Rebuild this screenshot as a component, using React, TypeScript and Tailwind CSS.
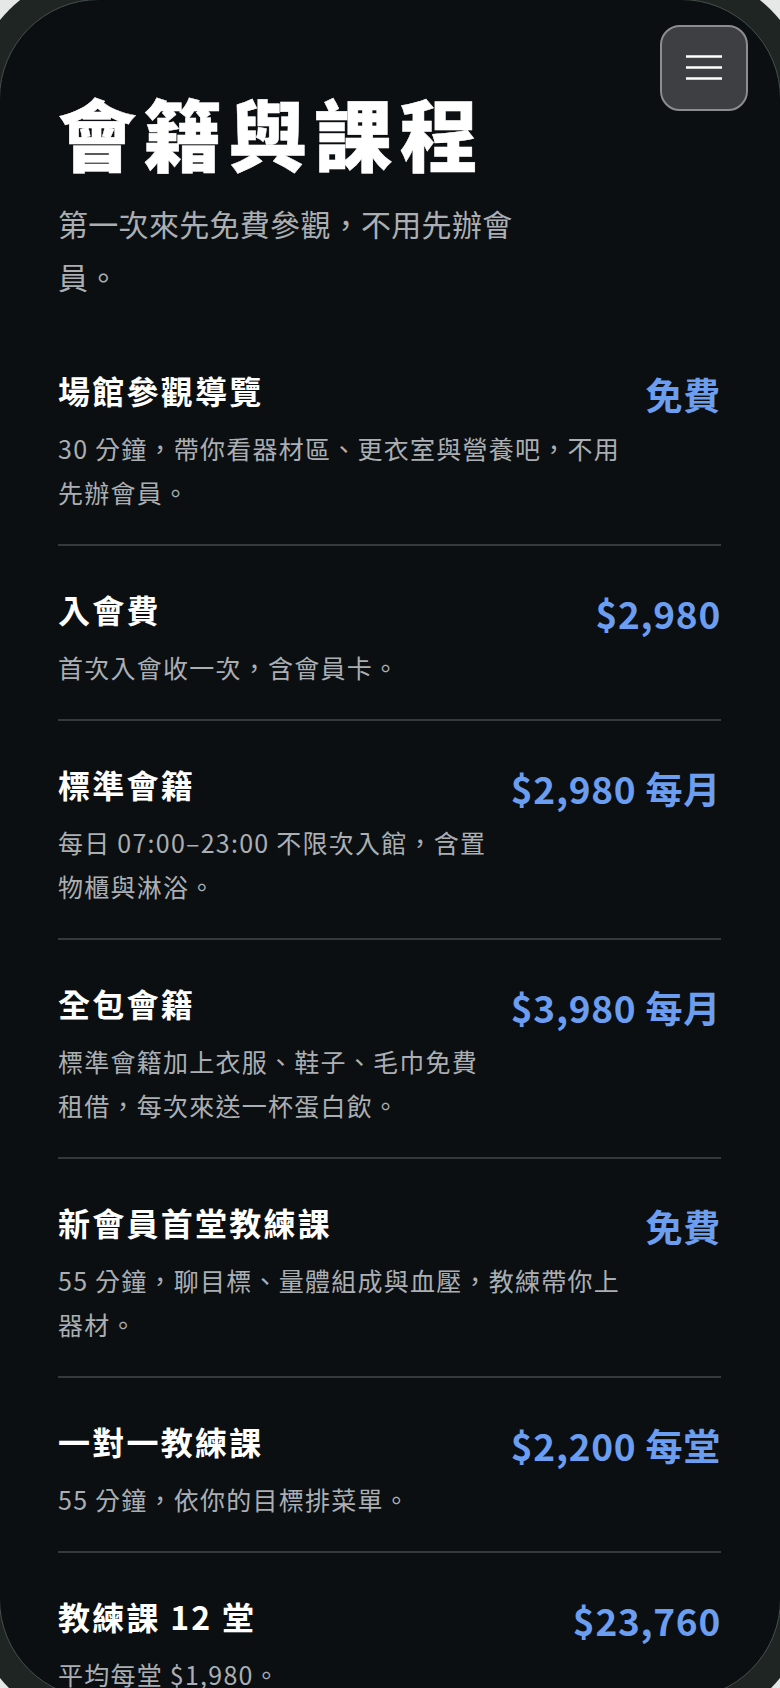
import React from "react";

type Item = { title: string; price: string; desc: string };

const items: Item[] = [
  { title: "場館參觀導覽", price: "免費", desc: "30 分鐘，帶你看器材區、更衣室與營養吧，不用先辦會員。" },
  { title: "入會費", price: "$2,980", desc: "首次入會收一次，含會員卡。" },
  { title: "標準會籍", price: "$2,980 每月", desc: "每日 07:00–23:00 不限次入館，含置物櫃與淋浴。" },
  { title: "全包會籍", price: "$3,980 每月", desc: "標準會籍加上衣服、鞋子、毛巾免費租借，每次來送一杯蛋白飲。" },
  { title: "新會員首堂教練課", price: "免費", desc: "55 分鐘，聊目標、量體組成與血壓，教練帶你上器材。" },
  { title: "一對一教練課", price: "$2,200 每堂", desc: "55 分鐘，依你的目標排菜單。" },
  { title: "教練課 12 堂", price: "$23,760", desc: "平均每堂 $1,980。" },
];

export default function App() {
  return (
    <div
      className="h-[1688px] overflow-hidden bg-[#e6e8e7]"
      style={{ fontFamily: '"Noto Sans CJK TC", "Noto Sans", sans-serif' }}
    >
      <div className="-m-[28px] rounded-[128px] bg-[#1e2523] p-[27px]">
        <div className="relative h-[1700px] overflow-hidden rounded-[100px] border border-[#46504c] bg-[#0c0f12] pl-[58px] pr-[59px] pt-[87px]">
          <button
            type="button"
            aria-label="選單"
            className="absolute right-[32px] top-[25px] flex h-[86px] w-[88px] items-center justify-center rounded-[20px] border-2 border-[#8c8d90] bg-[#3e3f43]"
          >
            <svg width="36" height="26" viewBox="0 0 36 26" fill="none">
              <path d="M0 1.5H36M0 12.5H36M0 23.5H36" stroke="#ffffff" strokeWidth="2.6" />
            </svg>
          </button>

          <h1 className="text-[78px] font-black leading-[90px] tracking-[0.095em] text-white [-webkit-text-stroke:0.5px_#ffffff]">
            會籍與課程
          </h1>
          <p className="mt-[20px] max-w-[468px] text-[30px] leading-[53px] tracking-[0.01em] text-[#abafb4]">
            第一次來先免費參觀，不用先辦會員。
          </p>

          <ul className="mt-[24px]">
            {items.map((it, i) => (
              <li
                key={i}
                className="flex items-start gap-6 border-b-2 border-[#35383d] pb-[30px] pt-[43px] last:border-b-0"
              >
                <div className="min-w-0 flex-1">
                  <h2 className="text-[32px] font-bold leading-[40px] tracking-[0.07em] text-white">{it.title}</h2>
                  <p className="mt-[16px] text-[25px] leading-[44px] tracking-[0.05em] text-[#abafb4]">{it.desc}</p>
                </div>
                <div className="shrink-0 pt-[4px] text-[37px] font-bold leading-[40px] tracking-[0.02em] text-[#6b9ef0]">
                  {it.price}
                </div>
              </li>
            ))}
          </ul>
        </div>
      </div>
    </div>
  );
}
